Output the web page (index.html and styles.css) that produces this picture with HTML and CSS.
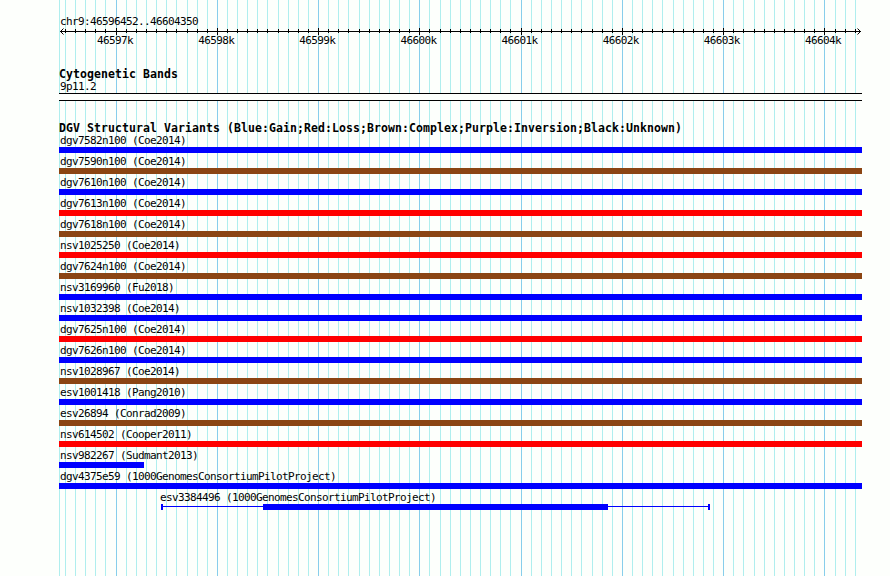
FILE: index.html
```
<!DOCTYPE html>
<html lang="en">
<head>
  <meta charset="UTF-8">
  <meta name="viewport" content="width=device-width, initial-scale=1.0">
  <title>chr9:46596452..46604350</title>
  <link rel="stylesheet" href="styles.css">
</head>
<body>
  <div class="browser">
    <!-- Vertical grid lines behind the tracks -->
    <svg class="grid" id="grid" width="890" height="576"></svg>

    <div class="panel">
      <div class="region">chr9:46596452..46604350</div>
      <svg class="ruler" id="ruler" width="803" height="8"></svg>
      <div class="ticks">
        <span>46597k</span>
        <span>46598k</span>
        <span>46599k</span>
        <span>46600k</span>
        <span>46601k</span>
        <span>46602k</span>
        <span>46603k</span>
        <span>46604k</span>
      </div>

      <h2 class="bands-title">Cytogenetic Bands</h2>
      <div class="label band-label">9p11.2</div>
      <div class="band"></div>

      <h2 class="variants-title">DGV Structural Variants (Blue:Gain;Red:Loss;Brown:Complex;Purple:Inversion;Black:Unknown)</h2>
      <div class="variants">
        <div class="label">dgv7582n100 (Coe2014)</div>
        <div class="bar gain"></div>
        <div class="label">dgv7590n100 (Coe2014)</div>
        <div class="bar complex"></div>
        <div class="label">dgv7610n100 (Coe2014)</div>
        <div class="bar gain"></div>
        <div class="label">dgv7613n100 (Coe2014)</div>
        <div class="bar loss"></div>
        <div class="label">dgv7618n100 (Coe2014)</div>
        <div class="bar complex"></div>
        <div class="label">nsv1025250 (Coe2014)</div>
        <div class="bar loss"></div>
        <div class="label">dgv7624n100 (Coe2014)</div>
        <div class="bar complex"></div>
        <div class="label">nsv3169960 (Fu2018)</div>
        <div class="bar gain"></div>
        <div class="label">nsv1032398 (Coe2014)</div>
        <div class="bar gain"></div>
        <div class="label">dgv7625n100 (Coe2014)</div>
        <div class="bar loss"></div>
        <div class="label">dgv7626n100 (Coe2014)</div>
        <div class="bar gain"></div>
        <div class="label">nsv1028967 (Coe2014)</div>
        <div class="bar complex"></div>
        <div class="label">esv1001418 (Pang2010)</div>
        <div class="bar gain"></div>
        <div class="label">esv26894 (Conrad2009)</div>
        <div class="bar complex"></div>
        <div class="label">nsv614502 (Cooper2011)</div>
        <div class="bar loss"></div>
        <div class="label">nsv982267 (Sudmant2013)</div>
        <div class="bar gain" style="width: 85px"></div>
        <div class="label">dgv4375e59 (1000GenomesConsortiumPilotProject)</div>
        <div class="bar gain"></div>
        <div class="ranged">
          <div class="label">esv3384496 (1000GenomesConsortiumPilotProject)</div>
          <div class="range">
            <div class="cap"></div>
            <div class="whisker" style="width: 100px"></div>
            <div class="bar gain" style="width: 345px"></div>
            <div class="whisker" style="width: 100px"></div>
            <div class="cap"></div>
          </div>
        </div>
      </div>
    </div>
  </div>

  <script>
    // Pixel columns of the 100bp and 1kb positions
    const minor = [59, 65, 75, 85, 95, 105, 126, 136, 146, 156, 166, 176, 187, 197, 207,
      227, 237, 247, 257, 267, 278, 288, 298, 308, 328, 338, 348, 359, 369, 379, 389, 399, 409,
      429, 440, 450, 460, 470, 480, 490, 500, 510, 531, 541, 551, 561, 571, 581, 592, 602, 612,
      632, 642, 652, 662, 673, 683, 693, 703, 713, 733, 743, 754, 764, 774, 784, 794, 804, 814,
      835, 845, 855];
    const major = [116, 217, 318, 419, 521, 622, 723, 824];
    const left = 59;

    const columns = (xs, y, h) => xs.map(x => `M${x + 0.5} ${y}v${h}`).join('');

    document.getElementById('grid').innerHTML =
      `<path class="minor" d="${columns(minor, 0, 576)}"/>` +
      `<path class="major" d="${columns(major, 0, 576)}"/>`;

    // Axis line, arrow heads and tick marks
    const shift = xs => xs.map(x => x - left);
    document.getElementById('ruler').innerHTML =
      `<path d="M1 3.5H802${columns(shift(minor.slice(1)), 1, 4)}${columns(shift(major), 0, 7)}"/>` +
      `<path d="M4.5 .5l-3 3l3 3M798.5 .5l3 3l-3 3"/>`;
  </script>
</body>
</html>
```
FILE: styles.css
```
body {
  margin: 0;
  background: #fdfffc;
  color: #000;
  font-family: 'DejaVu Sans Mono', monospace;
  font-size: 11px;
  letter-spacing: -0.622px;
}

.browser {
  position: relative;
  width: 890px;
  height: 576px;
  overflow: hidden;
}

/* Grid sits under every track */
.grid {
  position: absolute;
  top: 0;
  left: 0;
}

.grid path {
  fill: none;
  stroke-width: 1;
}

.grid .minor {
  stroke: #afeeee;
}

.grid .major {
  stroke: #87ceeb;
}

.panel {
  position: relative;
  width: 803px;
  padding: 14px 0 0 59px;
  white-space: nowrap;
}

.region {
  height: 14px;
  line-height: 15px;
  padding-left: 1px;
}

.ruler {
  display: block;
}

.ruler path {
  fill: none;
  stroke: #000;
  stroke-width: 1;
}

.ticks {
  display: grid;
  grid-template-columns: repeat(8, 101.15px);
  height: 12px;
  line-height: 9px;
  padding-left: 38px;
}

h2 {
  margin: 0;
  font-size: 11.5px;
  font-weight: bold;
  letter-spacing: 0.077px;
  height: 12px;
  line-height: 13px;
}

.bands-title {
  margin-top: 20px;
}

.label {
  height: 15px;
  line-height: 17px;
  padding-left: 1px;
}

.band-label {
  height: 13px;
  line-height: 13px;
}

.band {
  height: 6px;
  background: #fdfffc;
  border-top: 1px solid #000;
  border-bottom: 1px solid #000;
}

.variants-title {
  margin-top: 21px;
  margin-bottom: -2px;
}

.variants {
  display: flex;
  flex-direction: column;
}

/* Feature bars */
.bar {
  height: 6px;
}

.gain {
  background: #0000ff;
}

.loss {
  background: #ff0000;
}

.complex {
  background: #8b4513;
}

/* Variant with inner and outer breakpoints */
.ranged {
  padding-left: 101px;
}

.ranged .label {
  padding-left: 0;
}

.range {
  display: flex;
  margin-left: 1px;
}

.cap {
  width: 2px;
  height: 6px;
  background: #0000ff;
}

.whisker {
  height: 1px;
  margin-top: 2px;
  background: #0000ff;
}
```
